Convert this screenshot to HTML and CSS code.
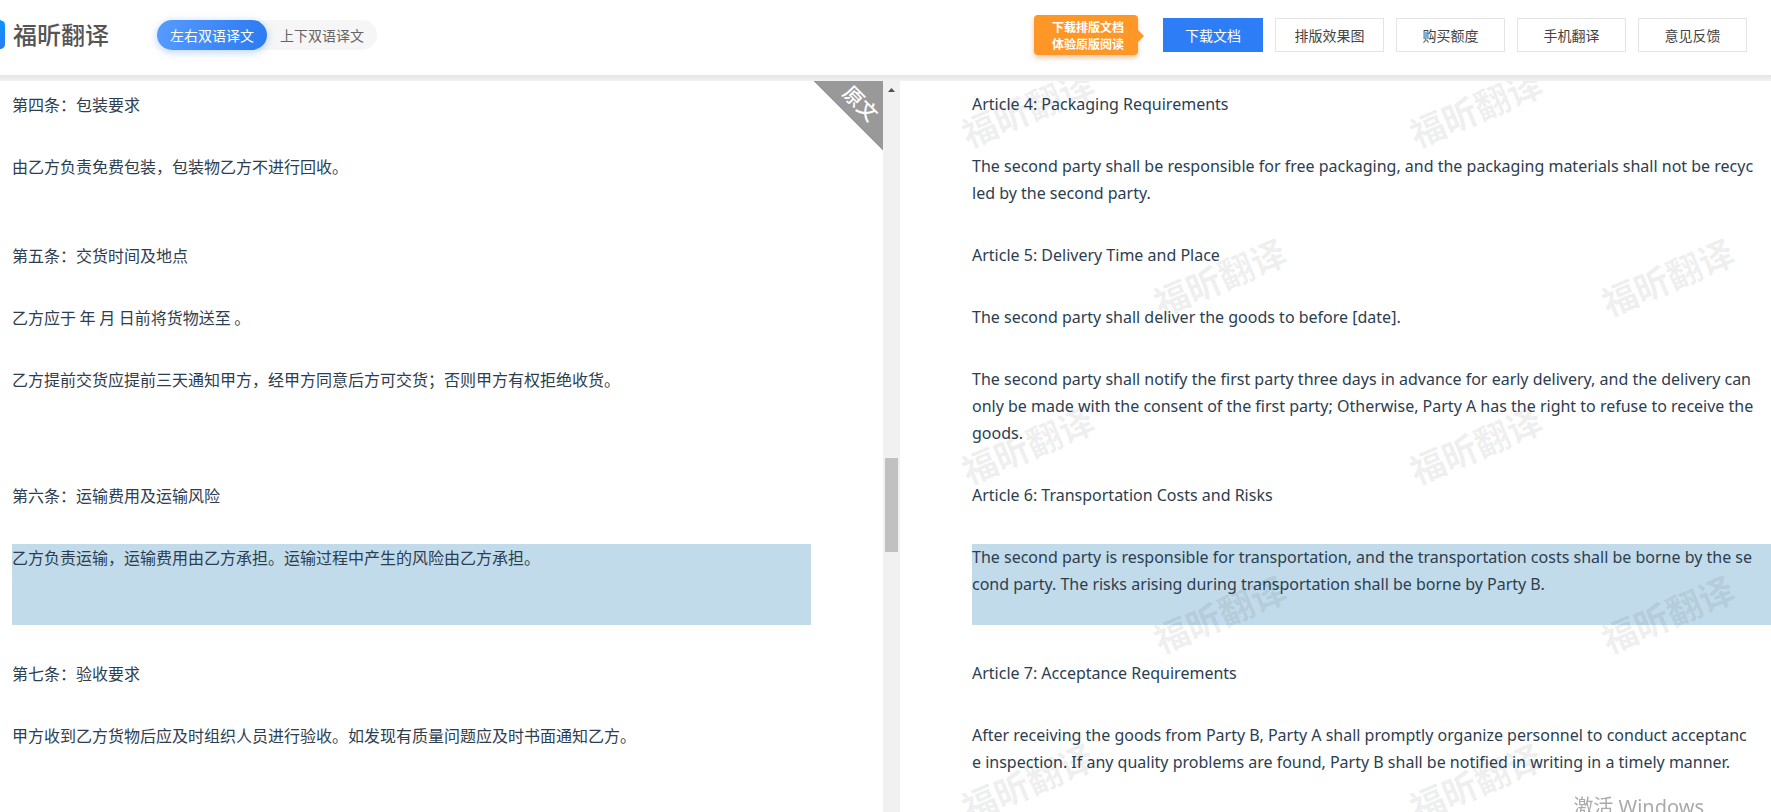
FILE: index.html
```html
<!DOCTYPE html>
<html lang="zh-CN">
<head>
<meta charset="utf-8">
<title>福昕翻译</title>
<link rel="stylesheet" href="styles.css">
</head>
<body>
<div class="app">
  <header class="header">
    <div class="brand">
      <svg class="brand-mark" viewBox="0 0 5 30" aria-hidden="true">
        <defs><linearGradient id="mark" x1="0" y1="0" x2="0" y2="1"><stop offset="0" stop-color="#0a96ff"/><stop offset="1" stop-color="#2b7cf0"/></linearGradient></defs>
        <path d="M0 0.500Q1 2 3 2Q5 3 5 6V25Q5 29 1 30H0Z" fill="url(#mark)"/>
      </svg>
      <span class="brand-name">福昕翻译</span>
    </div>
    <div class="switch">
      <button class="switch-item active" type="button">左右双语译文</button>
      <button class="switch-item" type="button">上下双语译文</button>
    </div>
    <div class="actions">
      <div class="tip">下载排版文档<br>体验原版阅读</div>
      <button class="btn primary" type="button">下载文档</button>
      <button class="btn" type="button">排版效果图</button>
      <button class="btn" type="button">购买额度</button>
      <button class="btn" type="button">手机翻译</button>
      <button class="btn" type="button">意见反馈</button>
    </div>
  </header>
  <main class="panes">
    <section class="pane source">
      <p class="block">第四条：包装要求</p>
      <p class="block two">由乙方负责免费包装，包装物乙方不进行回收。</p>
      <p class="block">第五条：交货时间及地点</p>
      <p class="block">乙方应于 年 月 日前将货物送至 。</p>
      <p class="block three">乙方提前交货应提前三天通知甲方，经甲方同意后方可交货；否则甲方有权拒绝收货。</p>
      <p class="block">第六条：运输费用及运输风险</p>
      <p class="block three current">乙方负责运输，运输费用由乙方承担。运输过程中产生的风险由乙方承担。</p>
      <p class="block">第七条：验收要求</p>
      <p class="block two">甲方收到乙方货物后应及时组织人员进行验收。如发现有质量问题应及时书面通知乙方。</p>
      <div class="corner"><span class="corner-text">原文</span></div>
    </section>
    <div class="scrollbar">
      <svg class="scroll-arrow" viewBox="0 0 7 4" aria-hidden="true"><path d="M0 4L3.500 0L7 4Z" fill="#505050"/></svg>
      <div class="thumb"></div>
    </div>
    <section class="pane target" lang="en">
      <p class="block">Article 4: Packaging Requirements</p>
      <p class="block two">The second party shall be responsible for free packaging, and the packaging materials shall not be recyc<br>led by the second party.</p>
      <p class="block">Article 5: Delivery Time and Place</p>
      <p class="block">The second party shall deliver the goods to before [date].</p>
      <p class="block three">The second party shall notify the first party three days in advance for early delivery, and the delivery can<br>only be made with the consent of the first party; Otherwise, Party A has the right to refuse to receive the<br>goods.</p>
      <p class="block">Article 6: Transportation Costs and Risks</p>
      <p class="block three current">The second party is responsible for transportation, and the transportation costs shall be borne by the se<br>cond party. The risks arising during transportation shall be borne by Party B.</p>
      <p class="block">Article 7: Acceptance Requirements</p>
      <p class="block two">After receiving the goods from Party B, Party A shall promptly organize personnel to conduct acceptanc<br>e inspection. If any quality problems are found, Party B shall be notified in writing in a timely manner.</p>
      <svg class="watermark" lang="zh-CN" aria-hidden="true">
        <g class="mark-text">
          <text transform="translate(128 28) rotate(-23)" y="13">福昕翻译</text>
          <text transform="translate(576 28) rotate(-23)" y="13">福昕翻译</text>
          <text transform="translate(320 197) rotate(-23)" y="13">福昕翻译</text>
          <text transform="translate(768 197) rotate(-23)" y="13">福昕翻译</text>
          <text transform="translate(128 365) rotate(-23)" y="13">福昕翻译</text>
          <text transform="translate(576 365) rotate(-23)" y="13">福昕翻译</text>
          <text transform="translate(320 534) rotate(-23)" y="13">福昕翻译</text>
          <text transform="translate(768 534) rotate(-23)" y="13">福昕翻译</text>
          <text transform="translate(128 702) rotate(-23)" y="13">福昕翻译</text>
          <text transform="translate(576 702) rotate(-23)" y="13">福昕翻译</text>
        </g>
      </svg>
    </section>
  </main>
  <div class="activate">激活 Windows</div>
</div>
</body>
</html>
```
FILE: styles.css
```css
* { box-sizing: border-box; }

body {
  margin: 0;
  background: #fff;
  color: #2c3e50;
  font-family: "Noto Sans", "Noto Sans CJK SC", sans-serif;
  font-size: 16px;
}

button { font: inherit; padding: 0; border: 0; cursor: pointer; }

.app {
  display: flex;
  flex-direction: column;
  height: 100vh;
  overflow: hidden;
}

.header {
  display: flex;
  flex: none;
  height: 81px;
  padding: 0 24px 11px 0;
  align-items: center;
  background: linear-gradient(#e4e4e4, #f2f2f2) bottom / 100% 6px no-repeat;
  font-family: "Noto Sans CJK SC", sans-serif;
}

.brand { display: flex; align-items: center; gap: 8px; width: 157px; padding-bottom: 3px; }
.brand-mark { width: 5px; height: 30px; }
.brand-name { color: #555; font-size: 24px; font-weight: 500; line-height: 30px; }

.switch { display: flex; border-radius: 15px; background: #f6f6f6; }
.switch-item {
  width: 110px;
  height: 30px;
  border-radius: 15px;
  background: none;
  color: #666;
  font-size: 14px;
}
.switch-item.active {
  background: linear-gradient(100deg, #569bff, #2b7af0);
  box-shadow: 0 2px 8px rgba(43, 122, 240, .35);
  color: #fff;
}

.actions { display: flex; align-items: center; gap: 12px; margin-left: auto; }

.tip {
  position: relative;
  width: 104px;
  height: 40px;
  margin-right: 13px;
  padding: 3px 0 0 4px;
  border-radius: 4px;
  background: #ff9727;
  box-shadow: 0 3px 5px rgba(180, 100, 20, .35);
  color: #fff;
  font-size: 12px;
  font-weight: 700;
  line-height: 17px;
  text-align: center;
}
.tip::after {
  content: "";
  position: absolute;
  top: 15px;
  left: 100%;
  border: 6px solid transparent;
  border-left-color: #ff9727;
  border-right-width: 0;
}

.btn {
  width: 109px;
  height: 34px;
  border: 1px solid #e4e4e4;
  background: #fff;
  color: #444;
  font-size: 14px;
}
.btn.primary { width: 100px; border-color: #2d7df6; background: #2d7df6; color: #fff; }

.panes {
  display: grid;
  flex: 1;
  grid-template-columns: 883fr 17px 871fr;
  min-height: 0;
}

.pane { position: relative; overflow: hidden; padding-top: 10px; }
.source { padding-left: 12px; padding-right: 72px; font-family: "Noto Sans CJK SC", sans-serif; }
.target { padding-left: 72px; }

.block { min-height: 27px; margin: 0 0 35px; line-height: 27px; }
.target .block { white-space: nowrap; }
.block.two { min-height: 54px; }
.block.three { min-height: 81px; }
.block.current { background: #c2dbea; }

.corner {
  position: absolute;
  top: 0;
  right: 0;
  width: 69px;
  height: 69px;
  background: linear-gradient(to top right, transparent 50%, #999 50%);
}
.corner-text {
  position: absolute;
  top: 7px;
  right: 2px;
  color: #fff;
  font-size: 20px;
  font-weight: 500;
  line-height: 30px;
  transform: rotate(45deg);
}

.scrollbar {
  display: flex;
  flex-direction: column;
  align-items: center;
  padding-top: 7px;
  background: #f1f1f1;
}
.scroll-arrow { width: 7px; height: 4px; }
.thumb { width: 13px; height: 94px; margin-top: 366px; background: #c1c1c1; }

.watermark {
  position: absolute;
  inset: 0;
  width: 100%;
  height: 100%;
  pointer-events: none;
}
.mark-text {
  fill: rgba(0, 0, 0, .07);
  font-family: "Noto Sans CJK SC", sans-serif;
  font-size: 35px;
  font-weight: 700;
  text-anchor: middle;
}

.activate {
  position: fixed;
  right: 67px;
  bottom: -10px;
  color: #aaa;
  font-size: 20px;
  line-height: 30px;
}
```
